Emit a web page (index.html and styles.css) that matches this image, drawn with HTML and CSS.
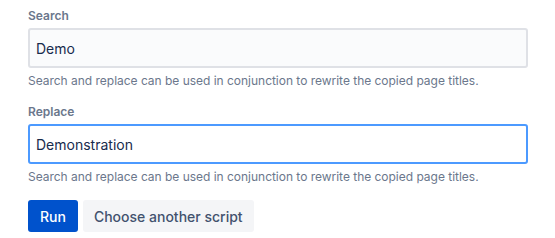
FILE: index.html
```html
<!DOCTYPE html>
<html lang="en">
<head>
  <meta charset="UTF-8" />
  <title>Search and replace</title>
  <link rel="stylesheet" href="styles.css">
</head>
<body>
  <form class="script-form">
    <div class="field">
      <label for="search">Search</label>
      <input type="text" id="search" class="text-input" value="Demo">
      <div class="helper">Search and replace can be used in conjunction to rewrite the copied page titles.</div>
    </div>

    <div class="field">
      <label for="replace">Replace</label>
      <input type="text" id="replace" class="text-input focused" value="Demonstration">
      <div class="helper">Search and replace can be used in conjunction to rewrite the copied page titles.</div>
    </div>

    <div class="actions">
      <button type="submit" class="btn btn-primary">Run</button>
      <button type="button" class="btn btn-subtle">Choose another script</button>
    </div>
  </form>
</body>
</html>
```

FILE: styles.css
```css
* {
  margin: 0;
  padding: 0;
  box-sizing: border-box;
  font-family: Inter, 'Liberation Sans', sans-serif;
}

body {
  background: #fff;
  padding: 8px 27px 0 28px;
}

.field {
  margin-bottom: 15px;
}

.field:last-of-type {
  margin-bottom: 16px;
}

.field label {
  display: block;
  font-size: 12px;
  line-height: 16px;
  font-weight: 600;
  color: #6b778c;
  margin-bottom: 4px;
}

.text-input {
  display: block;
  width: 100%;
  height: 40px;
  padding: 0 6px;
  border: 2px solid #dfe1e6;
  border-radius: 3px;
  background: #fafbfc;
  color: #172b4d;
  font-size: 14px;
  outline: none;
}

.text-input.focused {
  border-color: #4c9aff;
  background: #fff;
}

.helper {
  margin-top: 5px;
  font-size: 12px;
  line-height: 16px;
  color: #6b778c;
  letter-spacing: -0.02px;
}

.actions {
  display: flex;
  gap: 5px;
}

.btn {
  height: 32px;
  padding: 0 12px;
  border: none;
  border-radius: 3px;
  font-size: 14px;
  font-weight: 500;
  cursor: pointer;
}

.btn-primary {
  background: #0052cc;
  color: #fff;
}

.btn-subtle {
  padding: 0 11px;
  background: #f4f5f7;
  color: #42526e;
}
```
